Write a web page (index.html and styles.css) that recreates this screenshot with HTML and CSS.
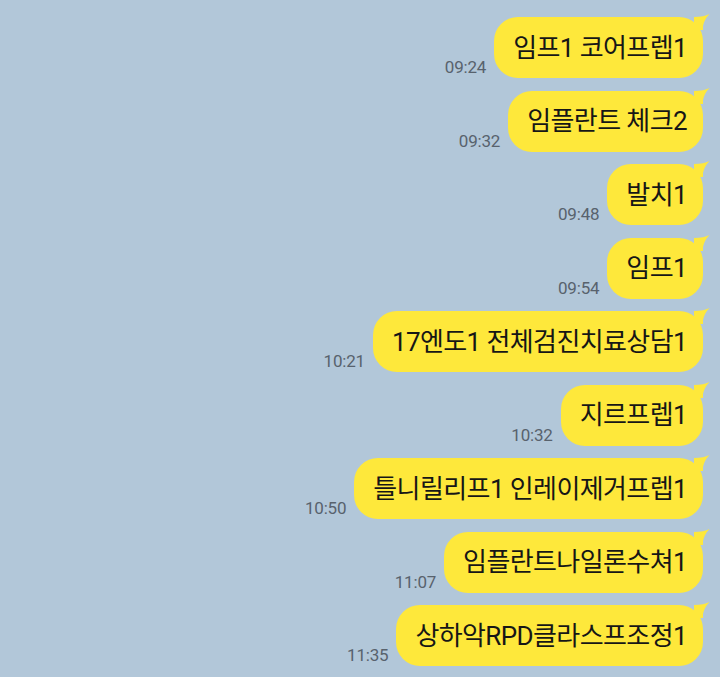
FILE: index.html
```html
<!DOCTYPE html>
<html lang="ko">
<head>
<meta charset="utf-8">
<link rel="stylesheet" href="styles.css">
</head>
<body>
<div class="chat">
  <div class="row"><span class="time">09:24</span><div class="bubble">임프1 코어프렙1<svg class="tail" viewBox="0 0 16 16"><path d="M0 3 Q10 3 15.5 0 Q10.5 5 9 12 L9 16 L0 16 Z"/></svg></div></div>
  <div class="row"><span class="time">09:32</span><div class="bubble">임플란트 체크2<svg class="tail" viewBox="0 0 16 16"><path d="M0 3 Q10 3 15.5 0 Q10.5 5 9 12 L9 16 L0 16 Z"/></svg></div></div>
  <div class="row"><span class="time">09:48</span><div class="bubble">발치1<svg class="tail" viewBox="0 0 16 16"><path d="M0 3 Q10 3 15.5 0 Q10.5 5 9 12 L9 16 L0 16 Z"/></svg></div></div>
  <div class="row"><span class="time">09:54</span><div class="bubble">임프1<svg class="tail" viewBox="0 0 16 16"><path d="M0 3 Q10 3 15.5 0 Q10.5 5 9 12 L9 16 L0 16 Z"/></svg></div></div>
  <div class="row"><span class="time">10:21</span><div class="bubble">17엔도1 전체검진치료상담1<svg class="tail" viewBox="0 0 16 16"><path d="M0 3 Q10 3 15.5 0 Q10.5 5 9 12 L9 16 L0 16 Z"/></svg></div></div>
  <div class="row"><span class="time">10:32</span><div class="bubble">지르프렙1<svg class="tail" viewBox="0 0 16 16"><path d="M0 3 Q10 3 15.5 0 Q10.5 5 9 12 L9 16 L0 16 Z"/></svg></div></div>
  <div class="row"><span class="time">10:50</span><div class="bubble">틀니릴리프1 인레이제거프렙1<svg class="tail" viewBox="0 0 16 16"><path d="M0 3 Q10 3 15.5 0 Q10.5 5 9 12 L9 16 L0 16 Z"/></svg></div></div>
  <div class="row"><span class="time">11:07</span><div class="bubble">임플란트나일론수쳐1<svg class="tail" viewBox="0 0 16 16"><path d="M0 3 Q10 3 15.5 0 Q10.5 5 9 12 L9 16 L0 16 Z"/></svg></div></div>
  <div class="row"><span class="time">11:35</span><div class="bubble">상하악RPD클라스프조정1<svg class="tail" viewBox="0 0 16 16"><path d="M0 3 Q10 3 15.5 0 Q10.5 5 9 12 L9 16 L0 16 Z"/></svg></div></div>
</div>
</body>
</html>
```
FILE: styles.css
```css
html, body {
  margin: 0;
  padding: 0;
  background: #b2c7d9;
  height: 100%;
  overflow: hidden;
}
.chat {
  display: flex;
  flex-direction: column;
  gap: 12.5px;
  padding: 17px 17px 0 0;
  font-family: Roboto, "Noto Sans CJK KR", sans-serif;
}
.row {
  display: flex;
  justify-content: flex-end;
  align-items: flex-end;
}
.time {
  font-size: 17px;
  color: #58626d;
  margin-right: 8px;
  line-height: 20px;
  margin-bottom: 1px;
  letter-spacing: -0.2px;
}
.bubble {
  position: relative;
  background: #fee83b;
  color: #161616;
  font-size: 26px;
  letter-spacing: -0.6px;
  line-height: 36px;
  height: 36px;
  padding: 12.5px 16px 12.5px 19px;
  border-radius: 24px;
  white-space: nowrap;
}
.tail {
  position: absolute;
  right: -7px;
  top: -3px;
  width: 16px;
  height: 16px;
  fill: #fee83b;
}
```
